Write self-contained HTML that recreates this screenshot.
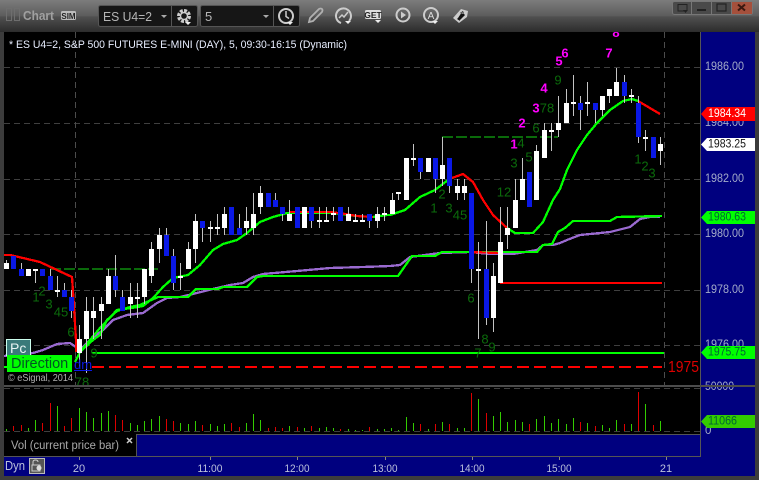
<!DOCTYPE html>
<html><head><meta charset="utf-8"><style>
html,body{margin:0;padding:0;background:#3a3a3a}
#w{position:relative;width:759px;height:480px;overflow:hidden}
svg{position:absolute;left:0;top:0}
text{font-family:"Liberation Sans",sans-serif}
.a{font-size:11.5px;fill:#a3abc9}
.t{font-size:11px;fill:#bcc2dc;text-anchor:middle}
.g{font-size:13px;fill:#0b6b0b;text-anchor:middle}
.m{font-size:13px;fill:#f0f;text-anchor:middle;font-weight:bold}
</style></head><body><div id="w">
<svg width="759" height="480" viewBox="0 0 759 480">
<defs><linearGradient id="tb" x1="0" y1="0" x2="0" y2="1"><stop offset="0" stop-color="#7c7c7c"/><stop offset=".5" stop-color="#5c5c5c"/><stop offset=".52" stop-color="#505050"/><stop offset="1" stop-color="#2c2c2c"/></linearGradient></defs>
<rect width="759" height="480" fill="#3c3c3c"/>
<rect width="759" height="32" fill="url(#tb)"/>
<!-- title bar -->
<g fill="none" stroke="#6e6e6e" stroke-width="1"><rect x="6.5" y="8.5" width="5" height="12"/><rect x="14.5" y="8.5" width="5" height="12"/></g>
<text x="23" y="20" font-size="13" font-weight="bold" fill="#a0a0a0" textLength="31" lengthAdjust="spacingAndGlyphs">Chart</text>
<rect x="61" y="11" width="15" height="9" rx="1.5" fill="#bbb"/><text x="68.5" y="19" font-size="8" font-weight="bold" fill="#222" text-anchor="middle">SIM</text>
<rect x="98.5" y="5.5" width="99" height="21" rx="2" fill="#161616" stroke="#555"/><path d="M171.5 6V26" stroke="#555"/>
<rect x="200.5" y="5.5" width="99" height="21" rx="2" fill="#161616" stroke="#555"/><path d="M273.5 6V26" stroke="#555"/>
<text x="103" y="21" font-size="13" fill="#b5b5b5" textLength="49" lengthAdjust="spacingAndGlyphs">ES U4=2</text><text x="205" y="21" font-size="13" fill="#b5b5b5">5</text>
<path d="M161 15h6l-3 3zM263 15h6l-3 3z" fill="#aaa"/>
<circle cx="184" cy="16" r="5.5" fill="none" stroke="#ccc" stroke-width="3" stroke-dasharray="3 1.3"/><circle cx="184" cy="16" r="3.5" fill="none" stroke="#ccc" stroke-width="1.4"/><path d="M185 22h6l-3 3z" fill="#eee"/>
<circle cx="286" cy="16" r="7" fill="none" stroke="#ccc" stroke-width="2"/><path d="M286 11v5.5l3 2" fill="none" stroke="#ccc" stroke-width="1.5"/><path d="M287 22h6l-3 3z" fill="#eee"/>
<path d="M309 22l1-4 9-9q2-1 3 0t0 3l-9 9z" fill="none" stroke="#b0b0b0" stroke-width="1.8"/>
<path d="M349 21a7.5 7.5 0 1 0-8 2" fill="none" stroke="#ccc" stroke-width="2"/><path d="M339 18l3-3 2 2 4-5" fill="none" stroke="#ccc" stroke-width="1.5"/><path d="M345 21h6l-3 3z" fill="#eee"/>
<rect x="365" y="10" width="16" height="9" rx="1.5" fill="#ddd"/><text x="373" y="18" font-size="8.5" font-weight="bold" fill="#222" text-anchor="middle">GET</text><path d="M375 20h6l-3 3z" fill="#eee"/>
<circle cx="403" cy="15" r="6.5" fill="none" stroke="#ccc" stroke-width="2"/><path d="M401 11.5v7l5-3.5z" fill="#ccc"/>
<circle cx="431" cy="15" r="7" fill="none" stroke="#ccc" stroke-width="2"/><text x="431" y="19" font-size="10" fill="#ddd" text-anchor="middle">A</text><path d="M432 21h6l-3 3z" fill="#eee"/>
<path d="M453 18l8-9 7 2-1 6-8 6z" fill="#ccc"/><path d="M460 13l3-2 1 3zM457 19l3 2-1-4zM462 12l-4 6 2 2 5-5z" fill="#111"/>
<rect x="672.5" y="1.5" width="80" height="13" rx="2" fill="#4a4a4a" stroke="#777"/>
<rect x="732" y="2" width="20" height="12" fill="#a5503c"/>
<path d="M691.5 2V14M711.5 2V14M731.5 2V14" stroke="#777"/>
<path d="M678 4.5h9v6M678 4v7h6" fill="none" stroke="#222"/><path d="M683 10h5l-2.500 3z" fill="#222"/>
<rect x="697" y="9" width="9" height="2" fill="#222"/>
<rect x="717" y="4" width="9" height="7" fill="none" stroke="#222" stroke-width="1.2"/>
<path d="M738 4.500l7 6M745 4.500l-7 6" stroke="#3a1810" stroke-width="2"/>
<!-- panes -->
<rect x="4" y="32" width="696" height="353" fill="#000"/>
<rect x="4" y="387" width="696" height="47" fill="#000"/>
<rect x="701" y="32" width="54" height="444" fill="#00007f"/>
<rect x="4" y="457" width="751" height="19" fill="#00007f"/>
<rect x="137" y="435" width="563" height="21" fill="#00007f"/>
<rect x="4" y="434" width="132" height="22" fill="#000"/>
<!-- grid -->
<g stroke="#3f3f3f" stroke-dasharray="6 4" fill="none" shape-rendering="crispEdges">
<path d="M4 67.5H704M4 123.5H704M4 179.5H704M4 234.5H704M4 290.5H704M4 345.5H704M4 388.5H704M4 431.5H704"/>
<path d="M75.5 32V385M664.5 32V385" stroke="#4c4c4c"/>
</g>
<!-- levels -->
<g fill="none" shape-rendering="crispEdges">
<path d="M50 269H158M442 137H558" stroke="#0a6a0a" stroke-width="2" stroke-dasharray="11 3"/>
<path d="M500 283H662" stroke="#f00" stroke-width="2"/>
<path d="M92 353H664" stroke="#0f0" stroke-width="2"/>
<path d="M92 367H662" stroke="#f00" stroke-width="2" stroke-dasharray="12 5"/>
<path d="M4 367H7" stroke="#0f0" stroke-width="2"/>
</g>
<!-- indicator lines -->
<g fill="none" stroke-width="2.3" stroke-linejoin="round" shape-rendering="crispEdges">
<polyline stroke="#9a6ad0" points="4,356 33,353 43,350 57,344 70,343 80,350 90,340 103,330 113,320 127,315 143,313 157,303 167,298 180,297 197,293 217,288 230,285 243,283 253,277 263,274 297,271 330,268 363,267 390,266 400,265 410,257 440,253 470,252 490,254 513,254 537,250 543,245 553,245 560,243 567,240 580,235 610,232 630,227 640,219 650,217 660,217"/>
<polyline stroke="#0f0" points="75,362 80,352 93,340 100,335 107,320 117,311 130,307 140,305 158,297 188,297 196,289 218,289 223,287 247,287 257,277 263,276 398,276 412,256 435,256 442,252 537,252 543,245 552,244 558,232 565,228 573,221 610,221 617,217 662,216"/>
<polyline stroke="#f00" points="470,252 500,253"/>
<polyline stroke="#0f0" points="75,362 80,352 100,328 117,310 138,307 143,306 153,298 163,287 173,278 188,275 200,265 213,250 223,244 237,240 247,233 260,222 273,217 287,213 330,213 333,213 357,216 373,217 387,215 390,215 405,210 420,197 435,190 448,180 452,178"/>
<polyline stroke="#f00" points="4,255 10,255 23,258 40,262 57,270 72,277 74,307 76,340 76,352"/>
<polyline stroke="#f00" points="289,212 330,212 345,214 357,216 373,217"/>
<polyline stroke="#f00" points="452,178 463,174 473,182 483,200 493,215 507,228"/>
<polyline stroke="#0f0" points="507,228 515,233 533,233 543,222 553,200 560,189 567,170 577,150 587,135 597,123 610,110 623,101 632,99 638,101"/>
<polyline stroke="#f00" points="638,101 660,114"/>
</g>
<!-- wicks -->
<path shape-rendering="crispEdges" fill="none" stroke="#c4c4c4" d="M6.5 260V269M21.5 263V276M35.5 269V283M50.5 269V290M57.5 276V297M64.5 283V297M71.5 290V318M79.5 325V367M86.5 297V373M93.5 297V339M101.5 297V339M108.5 269V304M115.5 255V297M122.5 290V311M130.5 283V318M137.5 283V318M144.5 269V304M151.5 242V283M159.5 228V263M166.5 228V256M173.5 249V290M180.5 263V290M188.5 242V269M195.5 214V263M202.5 221V242M210.5 221V242M217.5 214V235M224.5 207V235M239.5 214V235M246.5 207V235M253.5 193V235M260.5 186V214M275.5 193V207M282.5 207V221M289.5 200V221M311.5 207V228M319.5 207V228M326.5 207V221M333.5 207V221M348.5 207V221M355.5 214V221M362.5 214V221M369.5 214V228M377.5 207V228M384.5 207V221M392.5 193V214M398.5 193V200M413.5 144V166M420.5 158V179M435.5 158V193M442.5 137V186M449.5 158V193M457.5 179V200M464.5 179V200M471.5 193V283M478.5 242V339M486.5 221V325M493.5 263V332M500.5 207V283M507.5 207V249M515.5 179V228M522.5 158V200M536.5 145V200M544.5 123V158M551.5 123V151M558.5 96V137M566.5 89V123M573.5 75V116M580.5 96V130M587.5 82V116M595.5 103V123M602.5 96V116M609.5 89V103M616.5 68V96M624.5 75V103M631.5 89V103M638.5 96V143M645.5 130V151M653.5 137V158M660.5 137V165"/>
<!-- white bodies -->
<path shape-rendering="crispEdges" fill="none" stroke="#fff" stroke-width="5" d="M6.5 263V269M28.5 269V276M79.5 339V353M86.5 311V339M93.5 311V318M101.5 304V311M108.5 276V304M130.5 297V304M144.5 269V297M151.5 249V276M159.5 235V249M188.5 249V269M195.5 221V249M224.5 214V228M246.5 221V228M253.5 214V228M260.5 193V207M289.5 214V221M304.5 207V228M348.5 214V221M377.5 214V221M392.5 200V214M406.5 158V200M428.5 158V172M442.5 165V179M457.5 186V193M464.5 186V193M493.5 276V318M500.5 242V283M507.5 228V235M515.5 200V228M522.5 179V200M536.5 151V200M544.5 130V158M558.5 123V130M566.5 103V123M602.5 96V110M609.5 89V96M616.5 82V96M660.5 144V151"/>
<!-- dojis -->
<path shape-rendering="crispEdges" fill="none" stroke="#fff" stroke-width="2" d="M33 270H38M55 291H60M135 298H140M178 277H183M208 228H213M215 228H220M317 221H322M324 221H329M331 214H336M353 221H358M360 221H365M382 214H387M396 193H401M411 159H416M476 270H481M549 131H554M571 103H576M585 103H590M629 96H634M643 138H648"/>
<!-- blue bodies -->
<path shape-rendering="crispEdges" fill="none" stroke="#0a18e6" stroke-width="5" d="M13.5 256V269M21.5 269V276M42.5 269V276M50.5 276V290M64.5 290V297M71.5 297V311M115.5 276V290M122.5 297V311M166.5 235V256M173.5 256V283M202.5 221V228M231.5 207V235M239.5 228V235M268.5 193V207M275.5 200V207M282.5 207V214M297.5 207V228M311.5 207V221M340.5 207V221M369.5 214V221M420.5 158V172M435.5 158V179M449.5 158V186M471.5 193V269M486.5 269V318M529.5 172V207M580.5 103V110M595.5 103V110M624.5 82V96M638.5 103V137M653.5 137V158"/>
<!-- counts -->
<g dominant-baseline="central">
<text class="g" x="36" y="297">1</text><text class="g" x="42" y="291">2</text><text class="g" x="49" y="304">3</text><text class="g" x="61" y="312">45</text><text class="g" x="71" y="332">6</text><text class="g" x="94" y="353">9</text><text class="g" x="82" y="382">78</text>
<text class="g" x="442" y="194">2</text><text class="g" x="434" y="208">1</text><text class="g" x="449" y="208">3</text><text class="g" x="460" y="215">45</text><text class="g" x="471" y="298">6</text><text class="g" x="478" y="353">7</text><text class="g" x="485" y="339">8</text><text class="g" x="492" y="347">9</text><text class="g" x="504" y="192">12</text><text class="g" x="514" y="163">3</text><text class="g" x="529" y="157">5</text><text class="g" x="521" y="143">4</text><text class="g" x="536" y="128">6</text><text class="g" x="547" y="108">78</text><text class="g" x="558" y="80">9</text>
<text class="g" x="638" y="159">1</text><text class="g" x="645" y="166">2</text><text class="g" x="652" y="173">3</text>
<text class="m" x="514" y="144">1</text><text class="m" x="522" y="123">2</text><text class="m" x="536" y="108">3</text><text class="m" x="544" y="88">4</text><text class="m" x="559" y="61">5</text><text class="m" x="565" y="53">6</text><text class="m" x="609" y="53">7</text>
</g>
<svg x="4" y="32" width="696" height="20" overflow="hidden"><text x="612" y="5" font-size="13" font-weight="bold" fill="#f0f" text-anchor="middle">8</text></svg>
<text x="9" y="48" font-size="11" fill="#e8eeff" textLength="338" lengthAdjust="spacingAndGlyphs">* ES U4=2, S&amp;P 500 FUTURES E-MINI (DAY), 5, 09:30-16:15 (Dynamic)</text>
<!-- labels -->
<rect x="6.5" y="339.5" width="24" height="16" fill="#3a7a7a" stroke="#cfe"/>
<text x="10" y="353" font-size="14" fill="#e8f4f4">Pc</text>
<rect x="7" y="355" width="65" height="17" fill="#0f0"/>
<text x="11" y="368" font-size="14.500" fill="#052">Direction</text>
<text x="74" y="369" font-size="13" fill="#0a18e6">dm</text><path d="M74 370.500H92" stroke="#0a18e6"/>
<text x="8" y="381" font-size="10" fill="#b0b0b0" textLength="65" lengthAdjust="spacingAndGlyphs">© eSignal, 2014</text>
<text x="668" y="372" font-size="16" fill="#d00" textLength="31" lengthAdjust="spacingAndGlyphs">1975</text>
<!-- volume -->
<path shape-rendering="crispEdges" fill="none" stroke="#3c0" d="M6.5 429V431M28.5 428V431M35.5 420V431M57.5 406V431M79.5 408V431M86.5 412V431M93.5 418V431M101.5 413V431M108.5 411V431M130.5 423V431M137.5 425V431M144.5 421V431M151.5 419V431M159.5 416V431M180.5 423V431M188.5 424V431M195.5 421V431M210.5 424V431M217.5 426V431M224.5 424V431M246.5 423V431M253.5 414V431M260.5 420V431M289.5 426V431M304.5 428V431M319.5 428V431M326.5 427V431M333.5 428V431M348.5 429V431M355.5 430V431M362.5 430V431M377.5 429V431M384.5 429V431M391.5 428V431M398.5 430V431M406.5 417V431M413.5 423V431M428.5 429V431M442.5 422V431M457.5 428V431M464.5 428V431M478.5 399V431M493.5 416V431M500.5 412V431M507.5 422V431M515.5 420V431M522.5 422V431M536.5 419V431M544.5 416V431M551.5 423V431M558.5 419V431M566.5 424V431M573.5 418V431M587.5 423V431M602.5 425V431M609.5 428V431M616.5 420V431M631.5 424V431M645.5 404V431M660.5 421V431"/>
<path shape-rendering="crispEdges" fill="none" stroke="#d00" d="M13.5 426V431M21.5 425V431M42.5 423V431M50.5 403V431M64.5 426V431M71.5 418V431M115.5 415V431M122.5 420V431M166.5 419V431M173.5 421V431M202.5 425V431M231.5 423V431M239.5 427V431M268.5 428V431M275.5 427V431M282.5 428V431M297.5 427V431M311.5 426V431M340.5 429V431M369.5 427V431M420.5 424V431M435.5 424V431M449.5 424V431M471.5 393V431M486.5 413V431M529.5 424V431M580.5 422V431M595.5 426V431M624.5 424V431M638.5 392V431M653.5 425V431"/>
<!-- axis text -->
<g dominant-baseline="central">
<text class="a" x="705" y="67" textLength="39" lengthAdjust="spacingAndGlyphs">1986.00</text><text class="a" x="705" y="123" textLength="39" lengthAdjust="spacingAndGlyphs">1984.00</text><text class="a" x="705" y="179" textLength="39" lengthAdjust="spacingAndGlyphs">1982.00</text><text class="a" x="705" y="234" textLength="39" lengthAdjust="spacingAndGlyphs">1980.00</text><text class="a" x="705" y="290" textLength="39" lengthAdjust="spacingAndGlyphs">1978.00</text><text class="a" x="705" y="345" textLength="39" lengthAdjust="spacingAndGlyphs">1976.00</text><text class="a" x="705" y="387" textLength="29" lengthAdjust="spacingAndGlyphs">50000</text><text class="a" x="705" y="431">0</text>
</g>
<path d="M701 114l6-7h48v14h-48z" fill="#f00"/>
<path d="M701 144.500l6-6.500h48v13h-48z" fill="#fff"/>
<path d="M701 217.500l6-6.500h48v13h-48z" fill="#0f0"/>
<path d="M701 352.500l6-6.500h48v13h-48z" fill="#0f0"/>
<path d="M701 421.500l6-6.500h48v13h-48z" fill="#3c0"/>
<g dominant-baseline="central">
<text class="a" x="708" y="114" style="fill:#fff" textLength="38" lengthAdjust="spacingAndGlyphs">1984.34</text>
<text class="a" x="708" y="144.500" style="fill:#111" textLength="38" lengthAdjust="spacingAndGlyphs">1983.25</text>
<text class="a" x="708" y="217.500" style="fill:#063" textLength="38" lengthAdjust="spacingAndGlyphs">1980.63</text>
<text class="a" x="708" y="352.500" style="fill:#063" textLength="38" lengthAdjust="spacingAndGlyphs">1975.75</text>
<text class="a" x="708" y="421.500" style="fill:#063" textLength="29" lengthAdjust="spacingAndGlyphs">11066</text>
</g>
<!-- frame lines -->
<g stroke="#555" shape-rendering="crispEdges" fill="none">
<path d="M700.5 32V457M4 456.5H701M136.5 434V456M136 434.5H700"/>
<path d="M4 385.500H755M4 386.500H755" stroke="#4c4c4c"/>
</g>
<!-- bottom -->
<text x="11" y="449" font-size="11.5" fill="#aaa" textLength="108" lengthAdjust="spacingAndGlyphs">Vol (current price bar)</text>
<path d="M127 438l5 5M132 438l-5 5" stroke="#ccc" stroke-width="1.5"/>
<text x="5" y="470" font-size="13" fill="#bcc2dc" textLength="20" lengthAdjust="spacingAndGlyphs">Dyn</text>
<rect x="29.5" y="458.5" width="15" height="15" fill="#555" stroke="#bbb"/>
<path d="M33 465v-3q0-2 2.500-2t2.500 2M32 465h8v6h-8z" fill="none" stroke="#ccc"/><circle cx="39" cy="468" r="2.500" fill="#ddd"/>
<path d="M79.5 457V460M210.5 457V460M297.5 457V460M385.500 457V460M472.500 457V460M559.500 457V460M666.500 457V460" stroke="#888"/>
<text class="t" x="79" y="472">20</text><text class="t" x="210" y="472" textLength="25" lengthAdjust="spacingAndGlyphs">11:00</text><text class="t" x="297" y="472" textLength="25" lengthAdjust="spacingAndGlyphs">12:00</text><text class="t" x="385" y="472" textLength="25" lengthAdjust="spacingAndGlyphs">13:00</text><text class="t" x="472" y="472" textLength="25" lengthAdjust="spacingAndGlyphs">14:00</text><text class="t" x="559" y="472" textLength="25" lengthAdjust="spacingAndGlyphs">15:00</text><text class="t" x="666" y="472">21</text>
</svg>
</div></body></html>
